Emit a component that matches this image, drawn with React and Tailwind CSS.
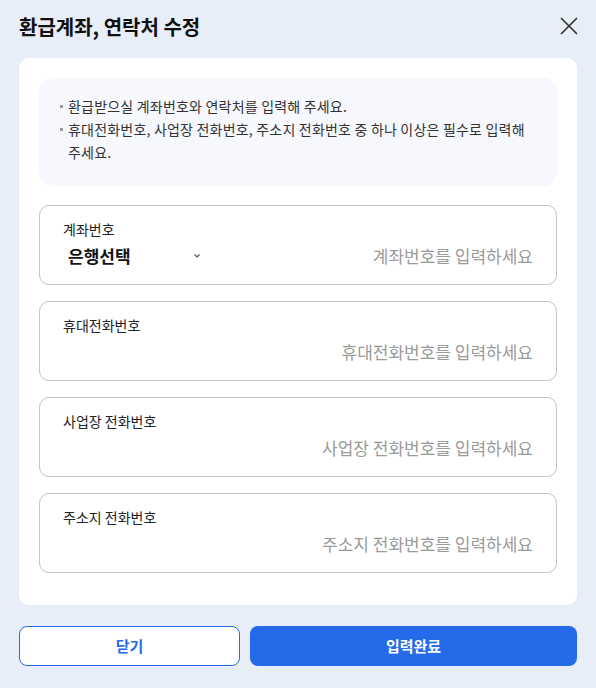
import React from "react";

const font = { fontFamily: '"Noto Sans CJK KR", "Noto Sans", sans-serif' };

function Field({ label, placeholder, bank }) {
  return (
    <div className="h-[80px] rounded-[10px] border border-[#c4c4c4] bg-white px-[23px] pt-[13px]">
      <div className="text-[14px] leading-[20px] text-[#222]">{label}</div>
      <div className="mt-[5px] flex items-center h-[24px]">
        {bank ? (
          <div className="flex items-center w-[140px] justify-between pl-[5px]">
            <span className="text-[17px] font-bold text-[#111] leading-[24px]">은행선택</span>
            <svg width="8" height="6" viewBox="0 0 8 6" className="mr-[2px]">
              <path d="M1.5 1.5 L4 4 L6.5 1.5" fill="none" stroke="#555" strokeWidth="1.2" />
            </svg>
          </div>
        ) : null}
        <div className="flex-1 text-right text-[17px] text-[#9a9a9a] leading-[24px]">{placeholder}</div>
      </div>
    </div>
  );
}

function Bullet({ children }) {
  return (
    <div className="flex">
      <span className="w-[8px] shrink-0 flex pt-[10px]">
        <span className="block w-[3px] h-[3px] bg-[#999]" />
      </span>
      <span className="[word-break:keep-all] tracking-[0.2px]">{children}</span>
    </div>
  );
}

export default function App() {
  return (
    <div style={font} className="w-[596px] h-[688px] bg-[#e8eef8] px-[19px] pt-[11px]">
      <div className="flex items-center justify-between h-[32px]">
        <h1 className="text-[20px] font-bold text-[#111]">환급계좌, 연락처 수정</h1>
        <svg width="20" height="20" viewBox="0 0 20 20" className="mr-[-2px] mt-[-2px]">
          <path d="M2 2 L18 18 M18 2 L2 18" stroke="#333" strokeWidth="1.7" fill="none" />
        </svg>
      </div>
      <div className="mt-[15px] bg-white rounded-[10px] px-[20px] pt-[20px] pb-[32px]">
        <div className="bg-[#f6f8fd] rounded-[14px] pl-[21px] pr-[20px] pt-[17px] pb-[22px] text-[14px] leading-[23px] text-[#333]">
          <Bullet>환급받으실 계좌번호와 연락처를 입력해 주세요.</Bullet>
          <Bullet>휴대전화번호, 사업장 전화번호, 주소지 전화번호 중 하나 이상은 필수로 입력해 주세요.</Bullet>
        </div>
        <div className="mt-[19px] flex flex-col gap-[16px]">
          <Field label="계좌번호" placeholder="계좌번호를 입력하세요" bank />
          <Field label="휴대전화번호" placeholder="휴대전화번호를 입력하세요" />
          <Field label="사업장 전화번호" placeholder="사업장 전화번호를 입력하세요" />
          <Field label="주소지 전화번호" placeholder="주소지 전화번호를 입력하세요" />
        </div>
      </div>
      <div className="mt-[21px] flex gap-[10px]">
        <button className="w-[221px] h-[40px] rounded-[8px] border border-[#256be9] bg-white text-[#256be9] text-[15px] font-bold">닫기</button>
        <button className="flex-1 h-[40px] rounded-[8px] bg-[#256be9] text-white text-[15px] font-bold">입력완료</button>
      </div>
    </div>
  );
}
